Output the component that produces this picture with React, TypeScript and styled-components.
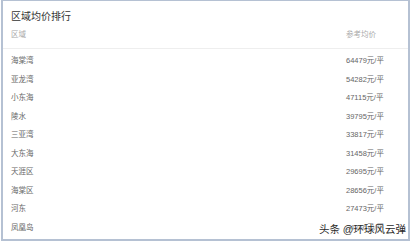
import * as React from 'react'
import styled, { createGlobalStyle } from 'styled-components'

const rows = [
  { area: '海棠湾', price: 64479 },
  { area: '亚龙湾', price: 54282 },
  { area: '小东海', price: 47115 },
  { area: '陵水', price: 39795 },
  { area: '三亚湾', price: 33817 },
  { area: '大东海', price: 31458 },
  { area: '天涯区', price: 29695 },
  { area: '海棠区', price: 28656 },
  { area: '河东', price: 27473 },
  { area: '凤凰岛', price: 24866 },
]

export default function App() {
  return (
    <>
      <GlobalStyle />
      <Frame>
        <Title>区域均价排行</Title>
        <HeaderRow>
          <span>区域</span>
          <span>参考均价</span>
        </HeaderRow>
        <List>
          {rows.map(row => (
            <Row key={row.area}>
              <span>{row.area}</span>
              <span>{row.price}元/平</span>
            </Row>
          ))}
        </List>
        <Watermark>头条 @环球风云弹</Watermark>
      </Frame>
    </>
  )
}

const GlobalStyle = createGlobalStyle`
  html, body {
    margin: 0;
    background: #fff;
    font-family: "Liberation Sans", "Noto Sans CJK SC", sans-serif;
  }
`

const Frame = styled.div`
  position: relative;
  box-sizing: border-box;
  width: 409px;
  height: 241px;
  margin-left: 1px;
  border: 2px solid #b5c1d3;
  border-top-width: 1px;
  background: #fff;
  overflow: hidden;
`

const Title = styled.div`
  padding: 9px 0 0 8px;
  font-size: 10px;
  line-height: 14px;
  color: #333;
`

const HeaderRow = styled.div`
  display: grid;
  grid-template-columns: 1fr 38px;
  margin-top: 2px;
  padding: 0 24px 4px 8px;
  font-size: 7.5px;
  line-height: 18px;
  color: #aaa;
  white-space: nowrap;
  border-bottom: 1px solid #eeeeee;
`

const List = styled.div`
  padding-top: 3px;
`

const Row = styled.div`
  display: grid;
  grid-template-columns: 1fr 38px;
  padding: 0 24px 0 8px;
  height: 18.5px;
  font-size: 7.5px;
  line-height: 18.5px;
  color: #666;
  white-space: nowrap;
`

const Watermark = styled.div`
  position: absolute;
  right: 2px;
  top: 221px;
  font-size: 10.5px;
  line-height: 14px;
  color: #2a2a2a;
  white-space: nowrap;
  text-shadow: 0 0 2px #fff, 0 0 2px #fff;
`
